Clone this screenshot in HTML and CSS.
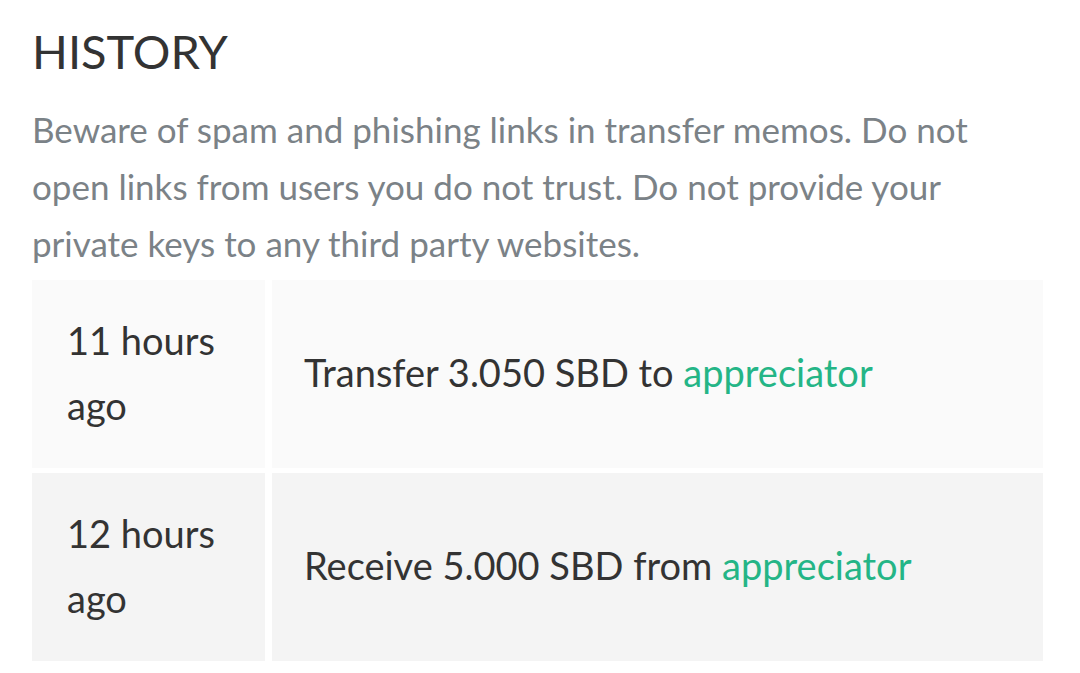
FILE: index.html
```html
<!DOCTYPE html>
<html lang="en">
<head>
    <meta charset="UTF-8">
    <meta name="viewport" content="width=device-width, initial-scale=1.0">
    <title>History</title>
    <link rel="stylesheet" href="styles.css">
</head>
<body>
    <div class="wallet">
        <h1 class="title">HISTORY</h1>
        <p class="notice">Beware of spam and phishing links in transfer memos. Do not open links from users you do not trust. Do not provide your private keys to any third party websites.</p>
        <div class="history">
            <div class="row odd">
                <div class="cell time">11 hours ago</div>
                <div class="cell op">Transfer 3.050 SBD to <a href="#">appreciator</a></div>
            </div>
            <div class="row even">
                <div class="cell time">12 hours ago</div>
                <div class="cell op">Receive 5.000 SBD from <a href="#">appreciator</a></div>
            </div>
        </div>
    </div>
</body>
</html>
```

FILE: styles.css
```css
body {
    margin: 0;
    background: #fff;
    font-family: Lato, "Open Sans", sans-serif;
    color: #333;
}
.wallet {
    padding: 21px 37px 0 32px;
}
.title {
    margin: 0;
    font-size: 47px;
    font-weight: 400;
    line-height: 60px;
    color: #333;
}
.notice {
    margin: 20px 0 8px;
    width: 1000px;
    font-size: 35px;
    line-height: 57px;
    color: #7b8287;
}
.history {
    display: flex;
    flex-direction: column;
    gap: 5px;
}
.row {
    display: grid;
    grid-template-columns: 233px 1fr;
    gap: 7px;
    height: 188px;
}
.cell {
    font-size: 38px;
    line-height: 65px;
}
.odd .cell {
    background: #fafafa;
}
.even .cell {
    background: #f4f4f4;
}
.time {
    padding: 28px 20px 0 35px;
}
.op {
    padding: 60px 20px 0 32px;
}
.op a {
    color: #24b586;
    text-decoration: none;
}
```
